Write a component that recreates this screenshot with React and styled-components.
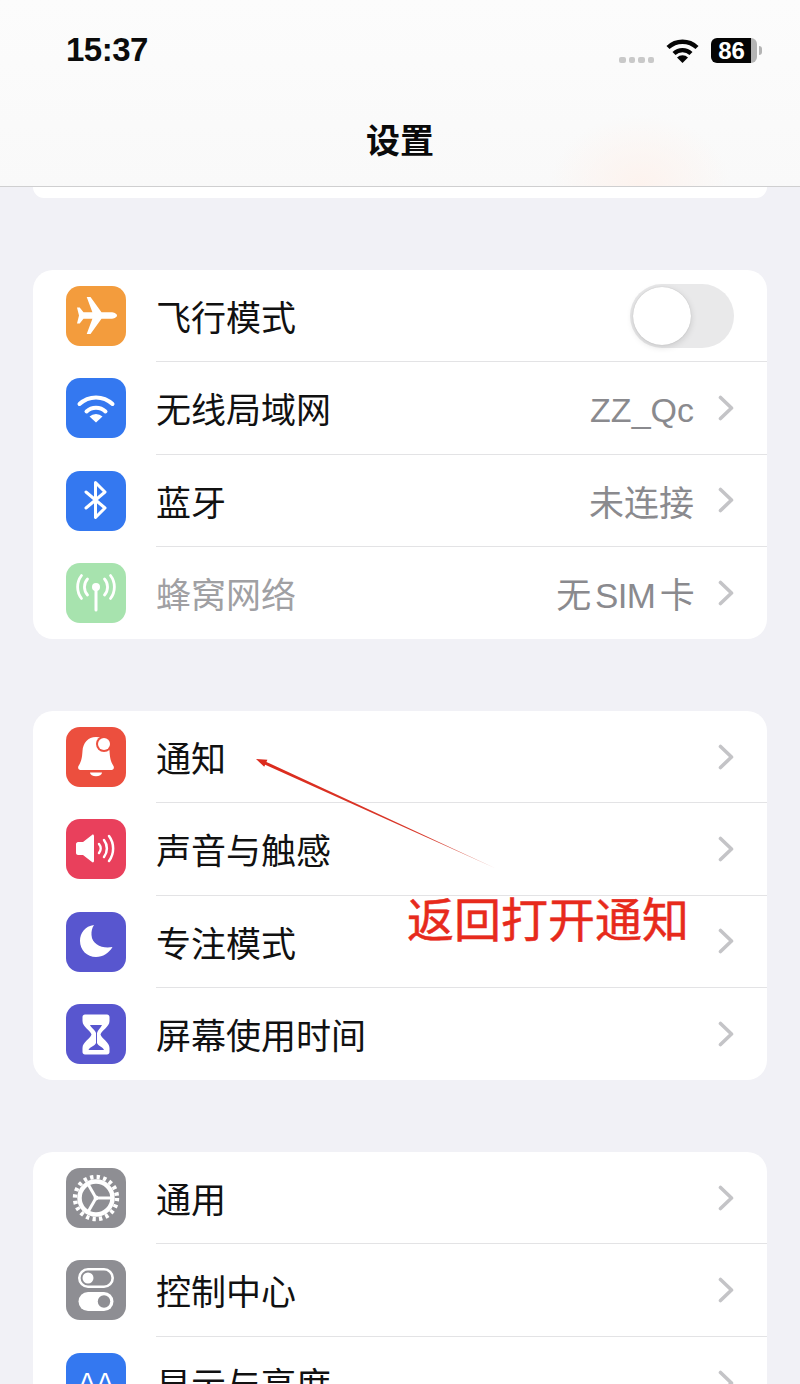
import React from 'react';
import styled, { createGlobalStyle } from 'styled-components';

const CJK = `"Noto Sans CJK SC", "Noto Sans", sans-serif`;
const LATIN = `"Liberation Sans", "Noto Sans CJK SC", sans-serif`;

const GlobalStyle = createGlobalStyle`
  html, body {
    margin: 0;
    padding: 0;
    height: 1384px;
    overflow: hidden;
    background: #f2f2f7;
  }
`;

const Page = styled.div`
  position: relative;
  width: 800px;
  height: 1384px;
  overflow: hidden;
  background: #f1f1f6;
  font-family: ${CJK};
`;

const Header = styled.header`
  box-sizing: border-box;
  height: 187px;
  border-bottom: 1.5px solid #cfcfd0;
  background:
    radial-gradient(ellipse 90px 70px at 640px 185px, #fdf3ee 0%, rgba(253, 243, 238, 0) 100%),
    linear-gradient(#fcfcfc, #f9f9f9);
  display: flex;
  flex-direction: column;
`;

const StatusBar = styled.div`
  display: flex;
  align-items: center;
  justify-content: space-between;
  height: 38px;
  margin-top: 31px;
  padding: 0 38px 0 66px;
`;

const Time = styled.span`
  font-family: ${LATIN};
  font-size: 33px;
  font-weight: 700;
  letter-spacing: -0.5px;
  color: #0b0b0b;
`;

const StatusIcons = styled.div`
  display: flex;
  align-items: center;
  gap: 12px;
`;

const Signal = styled.div`
  display: flex;
  gap: 3px;
  margin-top: 20px;
`;

const SignalDot = styled.i`
  display: block;
  width: 6.5px;
  height: 6px;
  border-radius: 2px;
  background: #c9c9c9;
`;

const Battery = styled.div`
  display: flex;
  align-items: center;
  gap: 2px;
`;

const BatteryBody = styled.div`
  width: 46px;
  height: 25px;
  border-radius: 6px;
  background: linear-gradient(90deg, #050505 86%, #b4b4b4 86%);
  color: #fff;
  font-family: ${LATIN};
  font-size: 24px;
  font-weight: 700;
  line-height: 25px;
  padding-right: 5px;
  box-sizing: border-box;
  text-align: center;
`;

const BatteryTip = styled.i`
  display: block;
  width: 3px;
  height: 9px;
  border-radius: 0 3px 3px 0;
  background: #b4b4b4;
`;

const Title = styled.h1`
  margin: 50px 0 0;
  text-align: center;
  font-size: 34px;
  line-height: 40px;
  font-weight: 700;
  color: #0a0a0a;
`;

const StubCard = styled.div`
  height: 11px;
  margin: 0 33px 72px;
  background: #fff;
  border-radius: 0 0 20px 20px;
`;

const Card = styled.section`
  margin: 0 33px 72px;
  background: #fff;
  border-radius: 20px;
`;

const Row = styled.div`
  display: flex;
  align-items: center;
  height: 92.25px;
  padding-left: 33px;
`;

const IconTile = styled.div`
  flex: none;
  width: 60px;
  height: 60px;
  border-radius: 14px;
  background: ${(p) => p.$bg};
  svg {
    display: block;
  }
`;

const RowBody = styled.div`
  flex: 1;
  align-self: stretch;
  box-sizing: border-box;
  margin-left: 30px;
  padding-right: 33px;
  display: flex;
  align-items: center;
  border-bottom: ${(p) => (p.$last ? 'none' : '1.5px solid #e3e3e5')};
`;

const Label = styled.span`
  flex: 1;
  font-size: 35px;
  color: ${(p) => (p.$dim ? '#a0a0a3' : '#111')};
`;

const Value = styled.span`
  font-family: ${LATIN};
  font-size: ${(p) => (p.$latin ? '34px' : '35px')};
  padding-top: ${(p) => (p.$latin ? '5px' : '0')};
  letter-spacing: ${(p) => (p.$tight ? '-0.7px' : '0')};
  word-spacing: -4.5px;
  color: #8a8a8e;
  margin-right: 24px;
`;

const Chevron = styled.svg`
  flex: none;
  width: 16px;
  height: 26px;
`;

const Toggle = styled.div`
  box-sizing: border-box;
  width: 104px;
  height: 64px;
  padding: 3px;
  border-radius: 32px;
  background: #e9e9ea;
`;

const Knob = styled.div`
  width: 58px;
  height: 58px;
  border-radius: 50%;
  background: #fff;
  box-shadow: 0 2px 7px rgba(0, 0, 0, 0.14), 0 0 1px rgba(0, 0, 0, 0.2);
`;

const ArrowMark = styled.svg`
  position: absolute;
  left: 250px;
  top: 750px;
  width: 255px;
  height: 125px;
  pointer-events: none;
`;

const Annotation = styled.div`
  position: absolute;
  left: 407px;
  top: 884px;
  font-size: 47px;
  font-weight: 400;
  -webkit-text-stroke: 0.5px #e72a1c;
  line-height: 66px;
  color: #e72a1c;
  white-space: nowrap;
`;

const Plane = () => (
  <svg width="60" height="60" viewBox="0 0 60 60">
    <path fill="#fff" d="M51 29.500c0-1.800-3-3.200-6-3.200H35.500L24.500 11h-3.800l5.700 15.300H17.500L13.700 21.500H11L13 29.500l-2 8h2.700l3.800-4.800h8.900L20.700 48h3.800l11-15.300H45c3 0 6-1.400 6-3.200z" />
  </svg>
);

const WifiTile = () => (
  <svg width="60" height="60" viewBox="0 0 60 60">
    <g fill="none" stroke="#fff" strokeWidth="4" strokeLinecap="round">
      <path d="M13.500 26a24 24 0 0 1 33 0" />
      <path d="M20.500 33.500a14 14 0 0 1 19 0" />
    </g>
    <path fill="#fff" d="M30 44.500l-6.500-6a9.500 9.500 0 0 1 13 0z" />
  </svg>
);

const BluetoothMark = () => (
  <svg width="60" height="60" viewBox="0 0 60 60">
    <path fill="none" stroke="#fff" strokeWidth="3" strokeLinejoin="round" strokeLinecap="round" d="M20 21l19 16-9.500 9.500v-35L39 21 20 37" />
  </svg>
);

const Antenna = () => (
  <svg width="60" height="60" viewBox="0 0 60 60">
    <circle cx="30" cy="24" r="4" fill="#fff" />
    <path stroke="#fff" strokeWidth="3" strokeLinecap="round" d="M30 26v21" />
    <g fill="none" stroke="#fff" strokeWidth="2.800" strokeLinecap="round">
      <path d="M21.500 16a12 12 0 0 0 0 16" />
      <path d="M38.500 16a12 12 0 0 1 0 16" />
      <path d="M15.500 12.500a19 19 0 0 0 0 23" />
      <path d="M44.500 12.500a19 19 0 0 1 0 23" />
    </g>
  </svg>
);

const Bell = () => (
  <svg width="60" height="60" viewBox="0 0 60 60">
    <path fill="#fff" d="M30 10c-8 0-13 6-13.500 14-.5 8-1.500 11-4 15-1 2 0 4 2 4h31c2 0 3-2 2-4-2.500-4-3.500-7-4-15C43 16 38 10 30 10z" />
    <path fill="#fff" d="M24 45.500h12a6 3.800 0 0 1-12 0z" />
    <circle cx="38" cy="17" r="8" fill="#ec4f3e" />
    <circle cx="38" cy="17" r="6" fill="#fff" />
  </svg>
);

const Speaker = () => (
  <svg width="60" height="60" viewBox="0 0 60 60">
    <path fill="#fff" d="M10 25c0-1 1-2 2-2h5l9-7c1-1 2 0 2 1v25c0 1-1 2-2 1l-9-7h-5c-1 0-2-1-2-2z" />
    <g fill="none" stroke="#fff" strokeWidth="2.500" strokeLinecap="round">
      <path d="M33 25a7 7 0 0 1 0 9" />
      <path d="M38 21a14 14 0 0 1 0 17" />
      <path d="M43 17a21 21 0 0 1 0 25" />
    </g>
  </svg>
);

const Moon = () => (
  <svg width="60" height="60" viewBox="0 0 60 60">
    <path fill="#fff" d="M28 13c-9 1-14 8-14 16 0 9 7 16 16 16 7 0 13-4 16.500-10-9.500 2-20.500-2-21-12-.2-4 .5-7 2.500-10z" />
  </svg>
);

const Hourglass = () => (
  <svg width="60" height="60" viewBox="0 0 60 60">
    <path fill="#fff" d="M19 10.500h22c1.500 0 2.500 1 2.500 2.500v4c0 6-8 9.500-9 13.500 1 4 9 7.500 9 13.500v4c0 1.500-1 2.500-2.500 2.500H19c-1.500 0-2.500-1-2.500-2.500v-4c0-6 8-9.500 9-13.500-1-4-9-7.500-9-13.500v-4c0-1.500 1-2.500 2.500-2.500z" />
    <path fill="#5856cf" d="M24 21h12c-1 3-4.500 5-5 8v10c1 3 6 4 7 7H22.500c1-3 6.500-4 7.500-7V29c-.5-3-5-5-6-8z" />
  </svg>
);

const Gear = () => (
  <svg width="60" height="60" viewBox="0 0 60 60">
    <circle cx="30" cy="30" r="21" fill="none" stroke="#fff" strokeWidth="4.400" strokeDasharray="3.299 3.299" />
    <circle cx="30" cy="30" r="16.500" fill="none" stroke="#fff" strokeWidth="4.500" />
    <g stroke="#fff" strokeWidth="3">
      <path d="M30 30h16" />
      <path d="M30 30l-8-13.900" />
      <path d="M30 30l-8 13.900" />
    </g>
    <circle cx="30" cy="30" r="2.400" fill="#fff" />
  </svg>
);

const Switches = () => (
  <svg width="60" height="60" viewBox="0 0 60 60">
    <rect x="13.300" y="9.300" width="33.400" height="17.400" rx="8.700" fill="none" stroke="#fff" strokeWidth="2.600" />
    <circle cx="22" cy="18" r="5.500" fill="#fff" />
    <rect x="12.500" y="32" width="35" height="19" rx="9.500" fill="#fff" />
    <circle cx="38" cy="41.500" r="6.200" fill="#8e8e93" />
  </svg>
);

const TextSize = () => (
  <svg width="60" height="60" viewBox="0 0 60 60">
    <text x="30" y="39" textAnchor="middle" fontFamily="Liberation Sans, sans-serif" fontSize="27" fill="#fff">AA</text>
  </svg>
);

const groups = [
  [
    { bg: '#f39c3d', icon: <Plane />, label: '飞行模式', toggle: true },
    { bg: '#3478f0', icon: <WifiTile />, label: '无线局域网', value: 'ZZ_Qc', latin: true },
    { bg: '#3478f0', icon: <BluetoothMark />, label: '蓝牙', value: '未连接' },
    { bg: '#a7e3ae', icon: <Antenna />, label: '蜂窝网络', value: '无 SIM 卡', dim: true, tight: true },
  ],
  [
    { bg: '#ec4f3e', icon: <Bell />, label: '通知' },
    { bg: '#e9405c', icon: <Speaker />, label: '声音与触感' },
    { bg: '#5856cf', icon: <Moon />, label: '专注模式' },
    { bg: '#5856cf', icon: <Hourglass />, label: '屏幕使用时间' },
  ],
  [
    { bg: '#8e8e93', icon: <Gear />, label: '通用' },
    { bg: '#8e8e93', icon: <Switches />, label: '控制中心' },
    { bg: '#3478f0', icon: <TextSize />, label: '显示与亮度' },
  ],
];

function SettingsRow({ item, last }) {
  return (
    <Row>
      <IconTile $bg={item.bg}>{item.icon}</IconTile>
      <RowBody $last={last}>
        <Label $dim={item.dim}>{item.label}</Label>
        {item.value && <Value $latin={item.latin} $tight={item.tight}>{item.value}</Value>}
        {item.toggle ? (
          <Toggle>
            <Knob />
          </Toggle>
        ) : (
          <Chevron viewBox="0 0 16 26">
            <path d="M2.500 2.500L13.500 13 2.500 23.500" fill="none" stroke="#c4c4c7" strokeWidth="3.600" strokeLinejoin="round" strokeLinecap="round" />
          </Chevron>
        )}
      </RowBody>
    </Row>
  );
}

export default function App() {
  return (
    <Page>
      <GlobalStyle />
      <Header>
        <StatusBar>
          <Time>15:37</Time>
          <StatusIcons>
            <Signal>
              <SignalDot />
              <SignalDot />
              <SignalDot />
              <SignalDot />
            </Signal>
            <svg width="33" height="25" viewBox="0 0 33 25">
              <g fill="none" stroke="#050505" strokeWidth="4.400">
                <path d="M2 9.500a21 21 0 0 1 29 0" />
                <path d="M8 15.500a12.500 12.500 0 0 1 17 0" />
              </g>
              <path fill="#050505" d="M16.500 25l-5.500-5.500a7.800 7.800 0 0 1 11 0z" />
            </svg>
            <Battery>
              <BatteryBody>86</BatteryBody>
              <BatteryTip />
            </Battery>
          </StatusIcons>
        </StatusBar>
        <Title>设置</Title>
      </Header>
      <StubCard />
      {groups.map((rows, i) => (
        <Card key={i}>
          {rows.map((item, j) => (
            <SettingsRow key={item.label} item={item} last={j === rows.length - 1} />
          ))}
        </Card>
      ))}
      <ArrowMark viewBox="0 0 255 125">
        <defs>
          <linearGradient id="arrowFade" gradientUnits="userSpaceOnUse" x1="6" y1="9" x2="247" y2="119">
            <stop offset="0" stopColor="#dc2a1c" />
            <stop offset="0.7" stopColor="#d83a2c" />
            <stop offset="1" stopColor="#e09a90" />
          </linearGradient>
        </defs>
        <polygon fill="url(#arrowFade)" points="6,9 17.400,9.800 16.400,11.900 247,119 15.200,14.700 14.200,16.800" />
      </ArrowMark>
      <Annotation>返回打开通知</Annotation>
    </Page>
  );
}
